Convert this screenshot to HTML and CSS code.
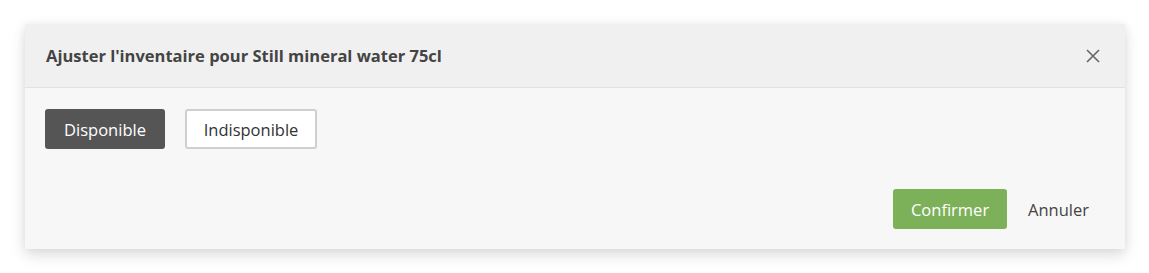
FILE: index.html
```html
<!DOCTYPE html>
<html lang="fr">
<head>
<meta charset="utf-8">
<link rel="stylesheet" href="styles.css">
</head>
<body>
<div class="modal">
  <div class="modal-header">
    <h2 class="modal-title">Ajuster l'inventaire pour Still mineral water 75cl</h2>
    <button class="close" aria-label="Fermer">
      <svg width="14" height="14" viewBox="0 0 14 14"><path d="M1 1L13 13M13 1L1 13" stroke="#666" stroke-width="1.6" fill="none"/></svg>
    </button>
  </div>
  <div class="modal-body">
    <button class="btn btn-active">Disponible</button>
    <button class="btn btn-outline">Indisponible</button>
  </div>
  <div class="modal-footer">
    <button class="btn btn-primary">Confirmer</button>
    <button class="btn btn-link">Annuler</button>
  </div>
</div>
</body>
</html>
```
FILE: styles.css
```css
html, body {
  margin: 0;
  padding: 0;
  background: #ffffff;
}
body {
  font-family: "Open Sans", "Noto Sans", sans-serif;
  padding: 24px 24px 0 25px;
  height: 273px;
  box-sizing: border-box;
}
.modal {
  width: 1100px;
  background: #f7f7f7;
  box-shadow: 0 6px 14px rgba(0,0,0,0.14), 0 0 8px rgba(0,0,0,0.05);
}
.modal-header {
  display: flex;
  align-items: center;
  justify-content: space-between;
  height: 63px;
  padding: 0 25px 0 21px;
  background: #f0f0f0;
  border-bottom: 1px solid #e2e2e2;
}
.modal-title {
  margin: 0;
  font-size: 16.5px;
  font-weight: 700;
  color: #444;
}
.close {
  background: none;
  border: 0;
  padding: 0;
  width: 14px;
  height: 14px;
  display: flex;
}
.modal-body {
  display: flex;
  gap: 20px;
  padding: 21px 20px 0 20px;
}
.btn {
  font-family: inherit;
  font-size: 16.5px;
  height: 40px;
  border-radius: 3px;
  padding: 0 16px;
  cursor: pointer;
}
.btn-active {
  background: #555555;
  color: #fff;
  border: 0;
  width: 120px;
}
.btn-outline {
  background: #fff;
  color: #333;
  border: 2px solid #cfcfcf;
  width: 132px;
}
.modal-footer {
  display: flex;
  justify-content: flex-end;
  align-items: center;
  gap: 5px;
  padding: 40px 20px 20px 20px;
}
.btn-primary {
  background: #7cb159;
  color: #fff;
  border: 0;
  width: 114px;
}
.btn-link {
  background: none;
  border: 0;
  color: #444;
}
```
